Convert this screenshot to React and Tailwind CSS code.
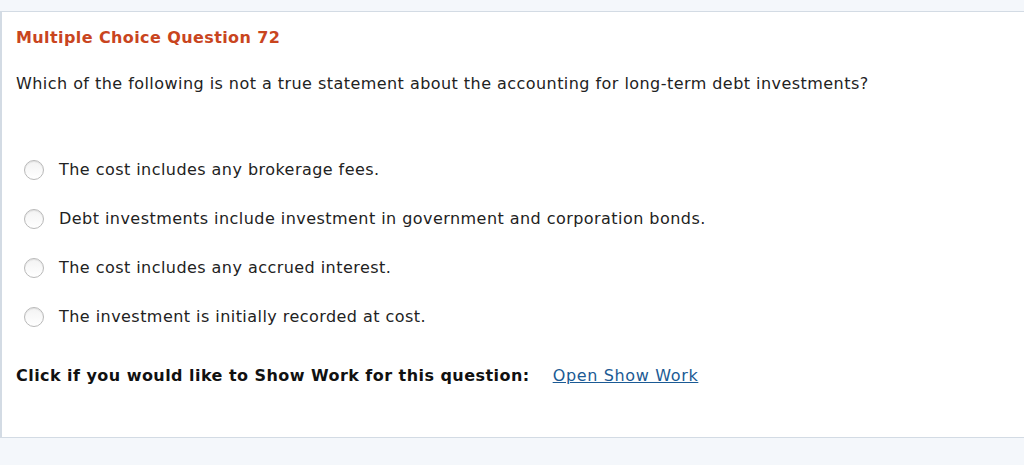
export default function App() {
  const options = [
    "The cost includes any brokerage fees.",
    "Debt investments include investment in government and corporation bonds.",
    "The cost includes any accrued interest.",
    "The investment is initially recorded at cost.",
  ];
  return (
    <div className="w-[1024px] h-[465px] bg-[#f4f7fb] pt-[11px] overflow-hidden tracking-[0.45px]" style={{ fontFamily: '"DejaVu Sans", Verdana, sans-serif' }}>
      <div className="bg-white border-t border-b border-l-2 border-[#d3dbe4] w-[1040px] h-[427px] pl-[14px]">
        <div className="pt-[16px] text-[16px] font-bold text-[#c9451e] leading-[20px] tracking-[0.4px]">Multiple Choice Question 72</div>
        <div className="mt-[26px] text-[16px] text-[#222] leading-[20px]">
          Which of the following is not a true statement about the accounting for long-term debt investments?
        </div>
        <div className="mt-[66px] flex flex-col gap-[29px]">
          {options.map((o) => (
            <div key={o} className="flex items-center h-[20px]">
              <span className="ml-[8px] w-[20px] h-[20px] shrink-0 rounded-full border border-[#b9b9b9] bg-gradient-to-b from-[#f3f3f3] to-white shadow-[inset_0_1px_1px_rgba(0,0,0,0.08)]"></span>
              <span className="ml-[15px] text-[16px] text-[#222] leading-[20px]">{o}</span>
            </div>
          ))}
        </div>
        <div className="mt-[39px] flex items-center text-[16px] leading-[20px]">
          <span className="font-bold text-[#111]">Click if you would like to Show Work for this question:</span>
          <a href="#" className="ml-[23px] text-[#1b5a94] underline tracking-[0.65px]">Open Show Work</a>
        </div>
      </div>
    </div>
  );
}
